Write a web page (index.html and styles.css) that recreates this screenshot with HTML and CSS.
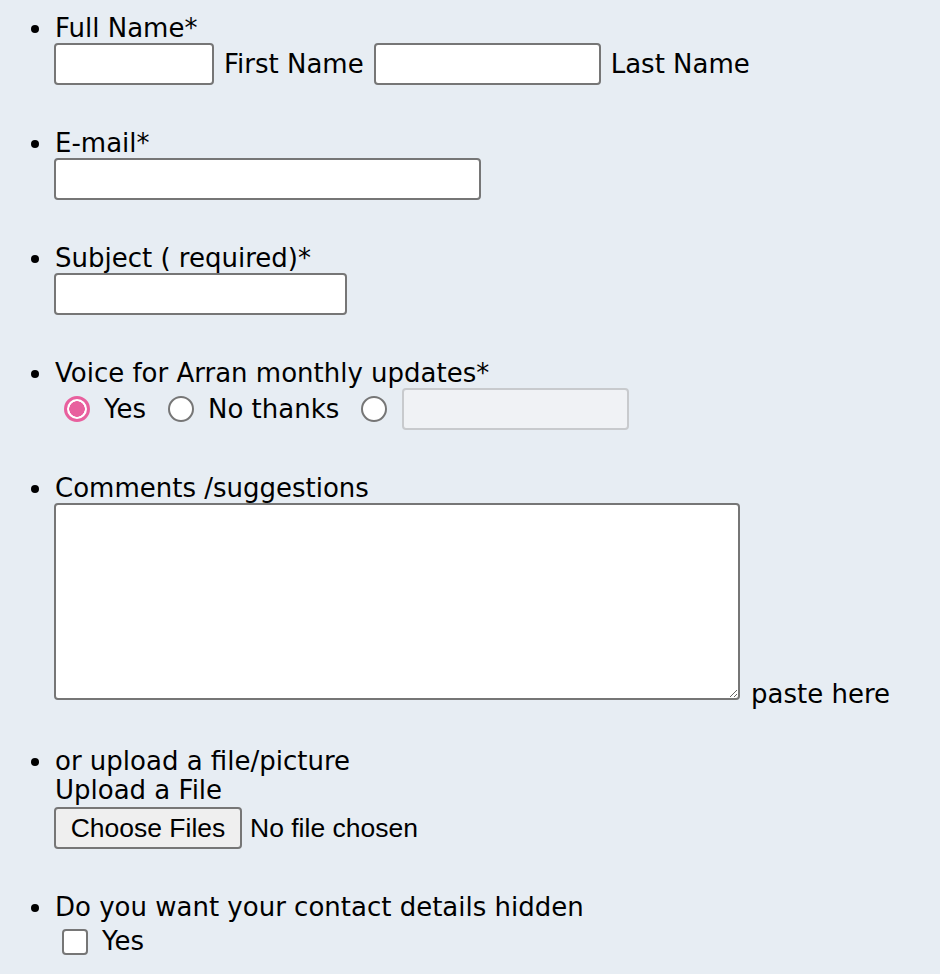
FILE: index.html
```html
<!DOCTYPE html>
<html>
<head>
<meta charset="utf-8">
<link rel="stylesheet" href="styles.css">
</head>
<body>
<form class="form">
  <ul class="fields">
    <li class="field">
      <div class="label">Full Name*</div>
      <div class="row">
        <input class="text first" type="text"><span>First Name</span>
        <input class="text last" type="text"><span>Last Name</span>
      </div>
    </li>
    <li class="field">
      <div class="label">E-mail*</div>
      <div class="row"><input class="text email" type="text"></div>
    </li>
    <li class="field">
      <div class="label">Subject ( required)*</div>
      <div class="row"><input class="text subject" type="text"></div>
    </li>
    <li class="field">
      <div class="label">Voice for Arran monthly updates*</div>
      <div class="row radios">
        <input class="radio" type="radio" name="v" checked><span class="opt">Yes</span>
        <input class="radio" type="radio" name="v"><span class="opt">No thanks</span>
        <input class="radio" type="radio" name="v"><input class="text other" type="text" disabled>
      </div>
    </li>
    <li class="field field-area">
      <div class="label">Comments /suggestions</div>
      <div class="row area"><textarea class="comments"></textarea><span class="paste">paste here</span></div>
    </li>
    <li class="field">
      <div class="label">or upload a file/picture</div>
      <div class="label">Upload a File</div>
      <div class="row file">
        <button type="button" class="choose">Choose Files</button><span class="nofile">No file chosen</span>
      </div>
    </li>
    <li class="field">
      <div class="label">Do you want your contact details hidden</div>
      <div class="row check">
        <input class="checkbox" type="checkbox"><span class="opt">Yes</span>
      </div>
    </li>
  </ul>
</form>
</body>
</html>
```
FILE: styles.css
```css
html, body {
  margin: 0;
  padding: 0;
  background: #e7edf3;
}
body {
  font-family: "DejaVu Sans", Verdana, sans-serif;
  font-size: 26px;
  color: #000;
}
.form {
  padding-top: 14px;
}
.fields {
  margin: 0;
  padding: 0 0 0 54px;
  line-height: 29px;
}
.field {
  margin-bottom: 44px;
}
.field-area {
  margin-bottom: 47px;
}
.label {
  line-height: 29px;
  padding-left: 1px;
}
.row {
  display: flex;
  align-items: center;
  gap: 10px;
  line-height: 29px;
}
.text {
  box-sizing: border-box;
  height: 42px;
  margin: 0;
  border: 2px solid #767676;
  border-radius: 4px;
  background: #fff;
  padding: 0 4px;
  font: inherit;
}
.first { width: 160px; }
.last { width: 227px; }
.email { width: 427px; }
.subject { width: 293px; }
.other {
  width: 227px;
  margin-left: 9px;
  background: #f0f2f5;
  border-color: #c8cacd;
}
.radios { gap: 0; }
.radio {
  appearance: none;
  -webkit-appearance: none;
  box-sizing: border-box;
  flex: none;
  width: 26px;
  height: 26px;
  margin: 0 6px 0 10px;
  border: 2px solid #767676;
  border-radius: 50%;
  background: #fff;
}
.radio:checked {
  border: 3px solid #e8609e;
  background: radial-gradient(circle, #e8609e 0 7.5px, #fff 8px);
}
.opt {
  margin-left: 8px;
  margin-right: 12px;
}
.area {
  align-items: flex-end;
  gap: 11px;
}
.comments {
  box-sizing: border-box;
  width: 686px;
  height: 197px;
  margin: 0;
  border: 2px solid #767676;
  border-radius: 4px;
  background: #fff;
  resize: both;
}
.paste {
  line-height: 29px;
  margin-bottom: -9px;
}
.file { gap: 8px; }
.choose {
  box-sizing: border-box;
  width: 188px;
  height: 42px;
  margin: 2px 0 0;
  padding: 0;
  border: 2px solid #767676;
  border-radius: 4px;
  background: #efefef;
  font-family: "Liberation Sans", Arial, sans-serif;
  font-size: 26.5px;
  color: #000;
}
.nofile {
  font-family: "Liberation Sans", Arial, sans-serif;
  font-size: 26.5px;
  padding-top: 2px;
}
.check { gap: 0; padding-top: 5px; }
.checkbox {
  appearance: none;
  -webkit-appearance: none;
  box-sizing: border-box;
  flex: none;
  width: 26px;
  height: 26px;
  margin: 0 6px 0 8px;
  border: 2px solid #767676;
  border-radius: 4px;
  background: #fff;
}
```
